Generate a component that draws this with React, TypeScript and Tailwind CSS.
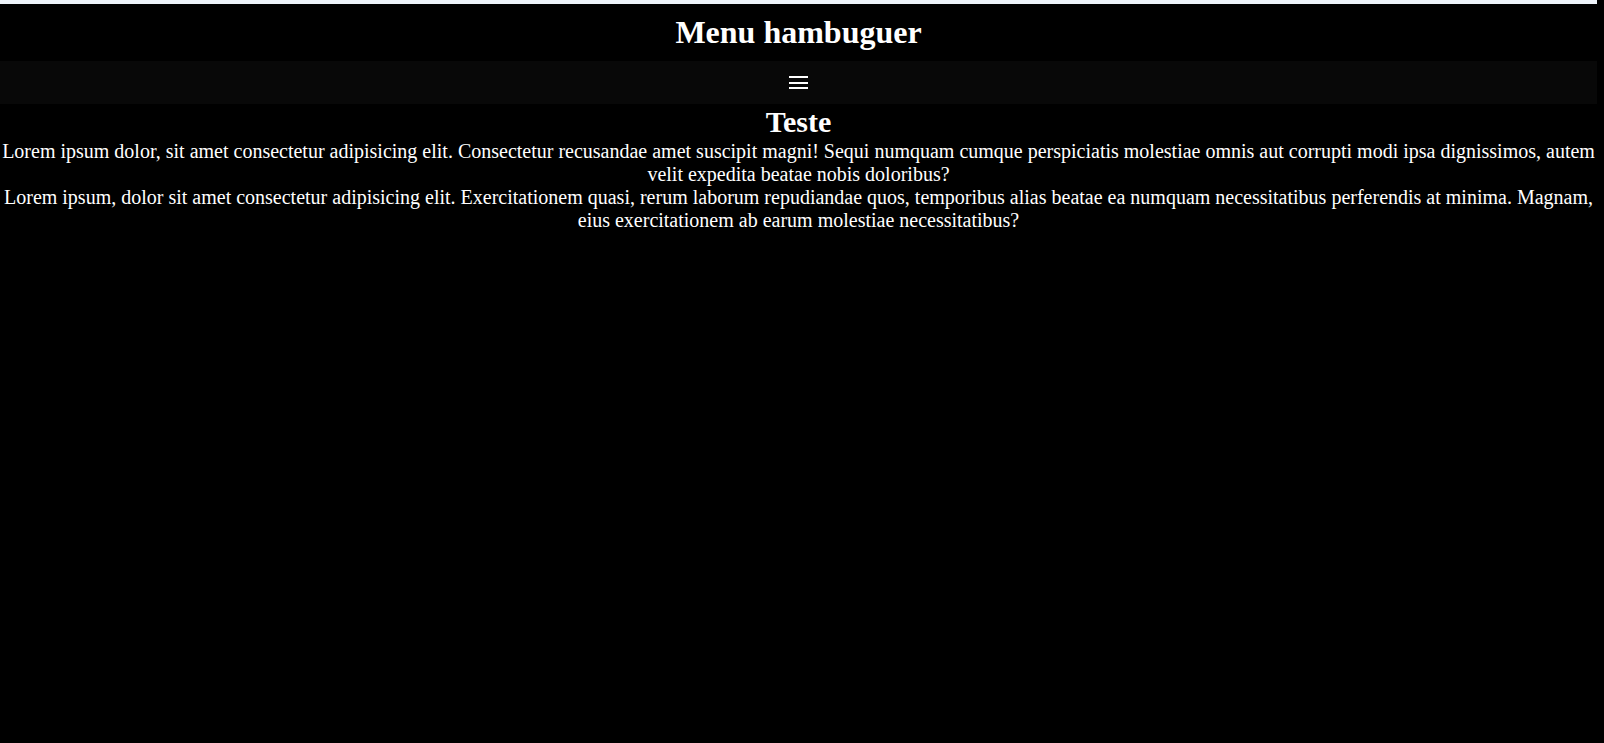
export default function App() {
  return (
    <div className="min-h-screen w-full bg-black font-['Liberation_Serif',serif] text-white">
      <div className="w-[1597px]">
        <div className="h-[4px] bg-[#eef4fa]" />
        <header className="py-[10px] text-center">
          <h1 className="text-[32px] font-bold leading-[normal]">Menu hambuguer</h1>
        </header>
        <nav className="flex h-[43px] items-center justify-center bg-[#080808]">
          <button className="flex h-[13px] w-[19px] flex-col justify-between" aria-label="menu">
            <span className="block h-[2px] w-full bg-white" />
            <span className="block h-[2px] w-full bg-white" />
            <span className="block h-[2px] w-full bg-white" />
          </button>
        </nav>
        <main className="text-center">
          <h2 className="text-[30px] font-bold leading-[36px]">Teste</h2>
          <p className="text-[20px] leading-[normal]">
            Lorem ipsum dolor, sit amet consectetur adipisicing elit. Consectetur recusandae amet suscipit magni! Sequi numquam cumque perspiciatis molestiae omnis aut corrupti modi ipsa dignissimos, autem velit expedita beatae nobis doloribus?
          </p>
          <p className="text-[20px] leading-[normal]">
            Lorem ipsum, dolor sit amet consectetur adipisicing elit. Exercitationem quasi, rerum laborum repudiandae quos, temporibus alias beatae ea numquam necessitatibus perferendis at minima. Magnam, eius exercitationem ab earum molestiae necessitatibus?
          </p>
        </main>
      </div>
    </div>
  );
}
